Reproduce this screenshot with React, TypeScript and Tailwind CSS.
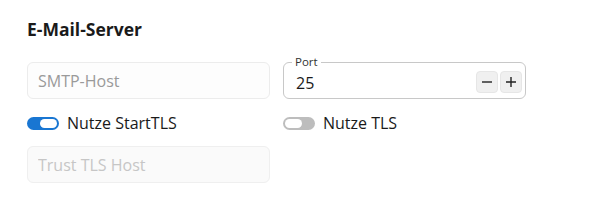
import React, { useState } from 'react';

const Toggle: React.FC<{ on: boolean; onChange: () => void; label: string }> = ({ on, onChange, label }) => {
  return <button type="button" onClick={onChange} className="flex items-center gap-[8px] h-[20px] text-left">
      <span className={`relative flex items-center w-[32px] h-[13px] rounded-full ${on ? 'bg-[#1976d2]' : 'bg-[#bdbdbd]'}`}>
        <span className={`absolute top-[2px] h-[9px] w-[17px] rounded-full bg-white ${on ? 'left-[13px]' : 'left-[2px]'}`}></span>
      </span>
      <span className="text-[16px] text-[#1a1a1a]">{label}</span>
    </button>;
};

const App: React.FC = () => {
  const [port, setPort] = useState(25);
  const [startTls, setStartTls] = useState(true);
  const [tls, setTls] = useState(false);
  return <div className="bg-white w-[607px] h-[210px] pl-[27px] pt-[17px]" style={{ fontFamily: '"Open Sans", "Noto Sans", sans-serif' }}>
      <h2 className="text-[17.5px] font-bold text-[#1a1a1a] leading-[24px]">E-Mail-Server</h2>
      <div className="grid grid-cols-[243px_243px] gap-x-[13px] mt-[21px] w-[499px]">
        <input placeholder="SMTP-Host" className="h-[37px] rounded-[6px] border border-[#ececec] bg-[#fdfdfd] px-[10px] text-[16px] placeholder:text-[#9a9a9a] outline-none" />
        <div className="relative h-[37px] rounded-[6px] border border-[#c8c8c8] flex items-center pl-[12px] pr-[3px]">
          <span className="absolute -top-[8px] left-[8px] bg-white px-[3px] text-[11.5px] leading-[14px] text-[#333]">Port</span>
          <input value={port} onChange={e => setPort(Number(e.target.value) || 0)} className="flex-1 min-w-0 pt-[4px] text-[16px] text-[#1a1a1a] outline-none bg-transparent" />
          <div className="flex gap-[2px] mt-[2px]">
            <button type="button" onClick={() => setPort(port - 1)} className="w-[22px] h-[22px] rounded-[4px] bg-[#f0f0f0] border border-[#e6e6e6] flex items-center justify-center">
              <svg width="12" height="12" viewBox="0 0 12 12"><path d="M1 6h10" stroke="#222" strokeWidth="1.4" /></svg>
            </button>
            <button type="button" onClick={() => setPort(port + 1)} className="w-[22px] h-[22px] rounded-[4px] bg-[#f0f0f0] border border-[#e6e6e6] flex items-center justify-center">
              <svg width="12" height="12" viewBox="0 0 12 12"><path d="M1 6h10M6 1v10" stroke="#222" strokeWidth="1.4" /></svg>
            </button>
          </div>
        </div>
        <div className="mt-[14px]">
          <Toggle on={startTls} onChange={() => setStartTls(!startTls)} label="Nutze StartTLS" />
        </div>
        <div className="mt-[14px]">
          <Toggle on={tls} onChange={() => setTls(!tls)} label="Nutze TLS" />
        </div>
        <input disabled placeholder="Trust TLS Host" className="mt-[13px] h-[37px] rounded-[6px] border border-[#efefef] bg-[#fafafa] px-[10px] text-[16px] placeholder:text-[#c6c6c6] outline-none" />
      </div>
    </div>;
};

export default App;
